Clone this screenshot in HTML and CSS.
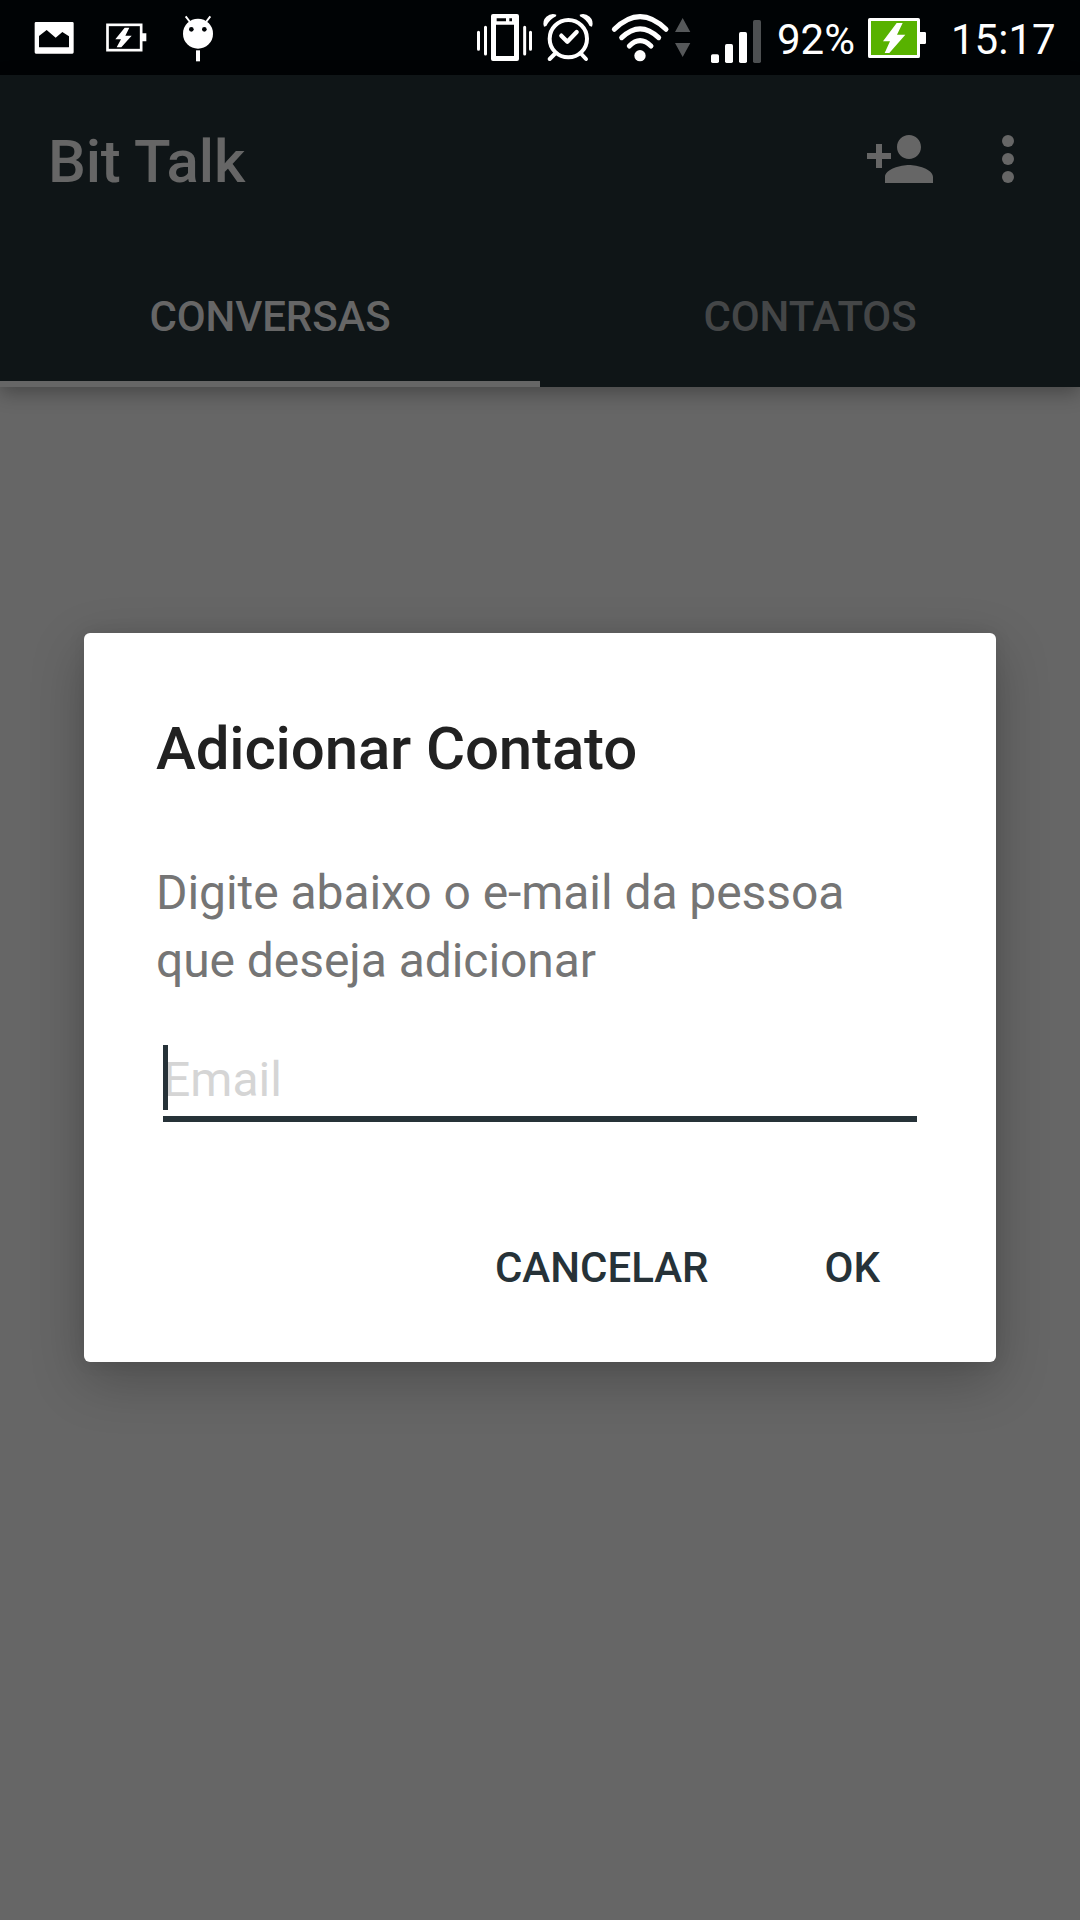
FILE: index.html
```html
<!DOCTYPE html>
<html lang="pt-BR">
<head>
<meta charset="utf-8">
<title>Bit Talk</title>
<link rel="stylesheet" href="styles.css">
</head>
<body>
<div class="screen">
  <header class="status">
    <div class="status-group notifications">
      <svg class="icon" width="40" height="75" viewBox="102 0 120 225"><path fill="#fff" fill-rule="evenodd" d="M108 66h109q4 0 4 4v87q0 4-4 4H108q-4 0-4-4V70q0-4 4-4zM117 108v32q0 2 2 2h86q2 0 2-2v-31l-20-13-20 17-27-23z"/></svg>
      <svg class="icon charging" width="41" height="75" viewBox="317 0 123 225"><rect x="321.500" y="74.500" width="101" height="76" fill="none" stroke="#fff" stroke-width="8"/><path fill="#fff" d="M425 100h13v24h-13zM373 83h14l-12 24h19l-31 35h-14l13-24h-17z"/></svg>
      <svg class="icon debug" width="32" height="75" viewBox="546 0 96 225"><path stroke="#fff" stroke-width="6" d="M557 49l13 17M631 49l-13 17"/><circle cx="594" cy="101" r="45" fill="#fff"/><circle cx="574" cy="88" r="7" fill="#000305"/><circle cx="613" cy="88" r="7" fill="#000305"/><path fill="#fff" d="M588 151h12v33h-12z"/></svg>
    </div>
    <div class="status-group system">
      <svg class="icon vibrate" width="60" height="75" viewBox="45 0 180 225"><path fill="#fff" fill-rule="evenodd" d="M99 42h72q6 0 6 6v129q0 6-6 6H99q-6 0-6-6V48q0-6 6-6zM108 74v94h54V74zM110 55v9h28v-9zM148 55v9h8v-9z"/><path stroke="#fff" stroke-width="9" stroke-linecap="round" d="M55.500 97v51M76.500 82v80M194 82v80M211.500 97v51"/></svg>
      <svg class="icon alarm" width="56" height="75" viewBox="240 0 168 225"><g fill="none" stroke="#fff" stroke-linecap="round" stroke-linejoin="round"><circle cx="325" cy="116" r="56" stroke-width="12"/><path stroke-width="12" d="M284 162l-15 15M364 162l14 15"/><path stroke-width="13" d="M304 107l18 18 28-29"/></g><path fill="#fff" d="M252 80q-6-18 7-30 14-12 30-6l-1 5q-19 9-29 29zM396 80q6-18-7-30-14-12-30-6l1 5q19 9 29 29z"/></svg>
      <svg class="icon wifi" width="82" height="75" viewBox="450 0 246 225"><path fill="none" stroke="#fff" stroke-width="15" stroke-linecap="round" d="M463 88q77-76 155 0M485 113q55-53 111 0M508 138q32-32 65 0"/><circle cx="540" cy="167" r="17" fill="#fff"/><path fill="#55585a" d="M645 96h46l-23-42zM645 129h46l-23 42z"/></svg>
      <svg class="icon signal" width="52" height="75" viewBox="60 0 156 225"><g fill="#fff"><rect x="63" y="163" width="24" height="26" rx="5"/><rect x="105" y="132" width="24" height="57" rx="5"/><rect x="147" y="96" width="24" height="93" rx="5"/></g><rect x="189" y="60" width="24" height="129" rx="5" fill="#4d5052"/></svg>
      <span class="percent">92%</span>
      <svg class="icon battery" width="58" height="75" viewBox="54 0 174 225"><rect x="58.500" y="58.500" width="147" height="111" rx="1" fill="#58b200" stroke="#fff" stroke-width="9"/><path fill="#fff" d="M208 96h16q4 0 4 4v28q0 4-4 4h-16zM140 69h18l-17 35h25l-48 55h-14l16-35H99z"/></svg>
      <span class="clock">15:17</span>
    </div>
  </header>

  <div class="appbar">
    <div class="toolbar">
      <h1 class="app-title">Bit Talk</h1>
      <svg class="action" width="72" height="72" viewBox="0 0 24 24" fill="#666"><path d="M15 12c2.210 0 4-1.790 4-4s-1.790-4-4-4-4 1.790-4 4 1.790 4 4 4zm-9-2V7H4v3H1v2h3v3h2v-3h3v-2H6zm9 4c-2.670 0-8 1.340-8 4v2h16v-2c0-2.660-5.330-4-8-4z"/></svg>
      <svg class="action overflow" width="72" height="72" viewBox="0 0 24 24" fill="#666"><circle cx="12" cy="6" r="2"/><circle cx="12" cy="12" r="2"/><circle cx="12" cy="18" r="2"/></svg>
    </div>
    <nav class="tabs">
      <div class="tab selected">CONVERSAS</div>
      <div class="tab">CONTATOS</div>
    </nav>
  </div>

  <main class="content">
    <section class="dialog">
      <h2 class="dialog-title">Adicionar Contato</h2>
      <p class="message">Digite abaixo o e-mail da pessoa<br>que deseja adicionar</p>
      <div class="field"><span class="caret"></span><span class="hint">Email</span></div>
      <div class="buttons">
        <span class="button">CANCELAR</span>
        <span class="button">OK</span>
      </div>
    </section>
  </main>
</div>
</body>
</html>
```
FILE: styles.css
```css
* {
  box-sizing: border-box;
  margin: 0;
}

body {
  font-family: Roboto, "Liberation Sans", sans-serif;
  background: #666;
}

.screen {
  display: flex;
  flex-direction: column;
  width: 1080px;
  height: 1920px;
  overflow: hidden;
  background: #666;
}

.status {
  display: flex;
  justify-content: space-between;
  height: 75px;
  padding: 0 24px 0 34px;
  background: #000305;
  color: #fff;
  font-size: 42px;
  line-height: 80px;
}

.status-group {
  display: flex;
}

.icon {
  display: block;
  flex: none;
}

.charging { margin-left: 31.670px; }
.debug { margin-left: 35.330px; }
.alarm { margin-left: 5px; }
.wifi { margin-left: 14px; }
.signal { margin-left: 18px; }

.percent {
  width: 91px;
  margin-left: 15px;
}

.clock {
  width: 105px;
  margin-left: 25px;
}

.appbar {
  position: relative;
  z-index: 1;
  height: 312px;
  background: #0f1517;
  box-shadow: 0 6px 18px rgba(0, 0, 0, 0.300);
  color: #666;
}

.toolbar {
  display: flex;
  align-items: center;
  height: 168px;
  padding: 0 36px 0 48px;
}

.app-title {
  flex: 1;
  padding-top: 6px;
  font-size: 60px;
  font-weight: 500;
  line-height: 70px;
  letter-spacing: -0.150px;
}

.overflow {
  margin-left: 36px;
}

.tabs {
  display: flex;
  height: 144px;
}

.tab {
  flex: 1;
  padding-top: 2px;
  color: #444647;
  font-size: 42px;
  font-weight: 500;
  line-height: 144px;
  letter-spacing: -0.100px;
  text-align: center;
}

.tab.selected {
  border-bottom: 6px solid #666;
  color: #666;
}

.content {
  flex: 1;
  padding: 246px 84px 0;
}

.dialog {
  height: 729px;
  padding: 81px 73px 0 72px;
  border-radius: 6px;
  background: #fff;
  box-shadow: 0 18px 54px rgba(0, 0, 0, 0.240), 0 0 18px rgba(0, 0, 0, 0.080);
}

.dialog-title {
  color: #212121;
  font-size: 60px;
  font-weight: 500;
  line-height: 70px;
  letter-spacing: -0.150px;
}

.message {
  margin-top: 75px;
  color: #757575;
  font-size: 48px;
  line-height: 68px;
  letter-spacing: -0.060px;
}

.field {
  display: flex;
  height: 77px;
  margin: 50px 6px 0 7px;
  border-bottom: 6px solid #263238;
}

.caret {
  position: relative;
  width: 5px;
  height: 65px;
  margin-right: -5px;
  background: #263238;
  z-index: 1;
}

.hint {
  color: #d5d5d5;
  font-size: 48px;
  line-height: 69px;
}

.buttons {
  display: flex;
  justify-content: flex-end;
  gap: 116px;
  margin-top: 121px;
  padding-right: 43px;
}

.button {
  color: #263238;
  font-size: 42px;
  font-weight: 500;
  line-height: 50px;
}
```
